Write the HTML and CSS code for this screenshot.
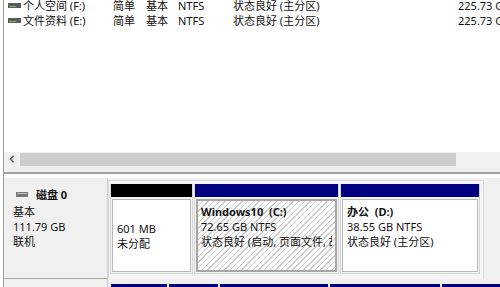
FILE: index.html
```html
<!DOCTYPE html>
<html lang="zh-CN">
<head>
<meta charset="UTF-8">
<title>磁盘管理</title>
<link rel="stylesheet" href="styles.css">
</head>
<body>
<div class="window">
    <!-- volume list -->
    <div class="list">
        <div class="row first">
            <span class="c-name"><svg class="drive" width="13" height="5" viewBox="0 0 13 5"><rect x="0" y="0" width="13" height="5" fill="#5a5a5a"/><rect x="1" y="3" width="7" height="1" fill="#6fbf4a"/></svg>个人空间 (F:)</span>
            <span class="c-layout">简单</span>
            <span class="c-type">基本</span>
            <span class="c-fs">NTFS</span>
            <span class="c-status">状态良好 (主分区)</span>
            <span class="c-cap">225.73 GB</span>
        </div>
        <div class="row">
            <span class="c-name"><svg class="drive" width="13" height="5" viewBox="0 0 13 5"><rect x="0" y="0" width="13" height="5" fill="#5a5a5a"/><rect x="1" y="3" width="7" height="1" fill="#6fbf4a"/></svg>文件资料 (E:)</span>
            <span class="c-layout">简单</span>
            <span class="c-type">基本</span>
            <span class="c-fs">NTFS</span>
            <span class="c-status">状态良好 (主分区)</span>
            <span class="c-cap">225.73 GB</span>
        </div>
    </div>
    <div class="hscroll">
        <span class="arrow"><svg width="6" height="8" viewBox="0 0 6 8"><path d="M4.5 0.8 L1.5 4 L4.5 7.2" fill="none" stroke="#606060" stroke-width="1.6"/></svg></span>
        <div class="thumb"></div>
    </div>
    <div class="split"></div>

    <!-- graphical view -->
    <div class="graph">
        <div class="disk">
            <div class="disk-info">
                <div class="disk-title"><svg width="12" height="5" viewBox="0 0 12 5"><rect width="12" height="5" fill="#7a7a7a"/><rect x="1" y="1" width="10" height="1" fill="#b8b8b8"/></svg><b>磁盘 0</b></div>
                <div>基本</div>
                <div>111.79 GB</div>
                <div>联机</div>
            </div>
            <div class="parts">
                <div class="part unalloc">
                    <div class="bar black"></div>
                    <div class="body center">
                        <div>601 MB</div>
                        <div>未分配</div>
                    </div>
                </div>
                <div class="part sys">
                    <div class="bar blue"></div>
                    <div class="body hatched">
                        <div><b>Windows10&nbsp; (C:)</b></div>
                        <div>72.65 GB NTFS</div>
                        <div class="clip">状态良好 (启动, 页面文件, 故障转储, 主分区)</div>
                    </div>
                </div>
                <div class="part data">
                    <div class="bar blue"></div>
                    <div class="body">
                        <div><b>办公&nbsp; (D:)</b></div>
                        <div>38.55 GB NTFS</div>
                        <div>状态良好 (主分区)</div>
                    </div>
                </div>
            </div>
        </div>
        <div class="disk next">
            <div class="disk-info"></div>
            <div class="bars">
                <span style="width:56px"></span>
                <span style="width:49px"></span>
                <span style="width:108px"></span>
                <span style="width:110px"></span>
                <span style="width:80px"></span>
            </div>
        </div>
    </div>
</div>
</body>
</html>
```

FILE: styles.css
```css
/* Disk management window */
body {
    margin: 0;
    background-color: #ffffff;
    font-family: "Noto Sans", "Noto Sans CJK SC", sans-serif;
    font-size: 11px;
    color: #111111;
    overflow: hidden;
}
.window {
    margin-left: 3px;
    border-left: 1px solid #a0a0a0;
    height: 287px;
    overflow: hidden;
}
.list {
    height: 152px;
    background-color: #ffffff;
    overflow: hidden;
}
.row {
    display: flex;
    height: 15px;
    line-height: 15px;
    white-space: nowrap;
}
.row.first {
    margin-top: -2px;
}
.row span {
    flex: none;
}
.c-name {
    width: 105px;
    padding-left: 4px;
    display: flex;
    align-items: center;
}
.drive {
    margin-right: 2px;
}
.c-layout { width: 33px; }
.c-type { width: 32px; }
.c-fs { width: 55px; }
.c-status { width: 225px; }
.c-cap { width: 60px; }
.hscroll {
    display: flex;
    align-items: center;
    height: 14px;
    background-color: #f0f0f0;
}
.hscroll .arrow {
    width: 16px;
    display: flex;
    justify-content: center;
}
.hscroll .thumb {
    width: 436px;
    height: 13px;
    background-color: #cdcdcd;
}
.split {
    height: 6px;
    background-color: #f0f0f0;
    border-bottom: 2px solid #a0a0a0;
}
.graph {
    background-color: #f0f0f0;
    height: 120px;
}
.disk {
    display: flex;
    margin-top: 4px;
    height: 101px;
}
.disk-info {
    flex: none;
    width: 104px;
    border-right: 1px solid #d0d0d0;
    border-bottom: 1px solid #a8a8a8;
    padding: 9px 0 0 9px;
    box-sizing: border-box;
    line-height: 15px;
}
.disk-title {
    display: flex;
    align-items: center;
    margin-bottom: 2px;
}
.disk-title svg {
    margin: 0 8px 0 3px;
}
.parts {
    display: flex;
    gap: 1px;
    margin: 2px 0 0 0;
    padding: 3px 3px 5px 1px;
    border: 1px solid #dadada;
    border-bottom: none;
    background-color: #f4f4f4;
}
.part {
    display: flex;
    flex-direction: column;
    border: 1px solid #d6d6d6;
    border-top: none;
}
.unalloc { width: 81px; }
.sys { width: 143px; }
.data { width: 138px; }
.bar {
    height: 13px;
}
.bar.black { background-color: #000000; }
.bar.blue { background-color: #000080; }
.body {
    flex: 1;
    margin: 2px 1px 1px;
    border: 1px solid #b9b9b9;
    background-color: #ffffff;
    padding: 4px 4px 0;
    line-height: 15px;
    white-space: nowrap;
    overflow: hidden;
}
.body.center {
    display: flex;
    flex-direction: column;
    justify-content: center;
    padding-top: 0;
}
.body.hatched {
    border: 2px solid #a6a6a6;
    padding: 3px 3px 0;
    background: repeating-linear-gradient(135deg, #ffffff 0px, #ffffff 3px, #cccccc 3px, #cccccc 4px);
}
.clip {
    overflow: hidden;
}
.disk.next {
    margin-top: 0;
}
.disk.next .disk-info {
    border-bottom: none;
    border-right: 1px solid #c8c8c8;
    height: 20px;
}
.bars {
    display: flex;
    gap: 2px;
    padding: 5px 0 0 3px;
}
.bars span {
    flex: none;
    height: 4px;
    background-color: #000080;
}
```
